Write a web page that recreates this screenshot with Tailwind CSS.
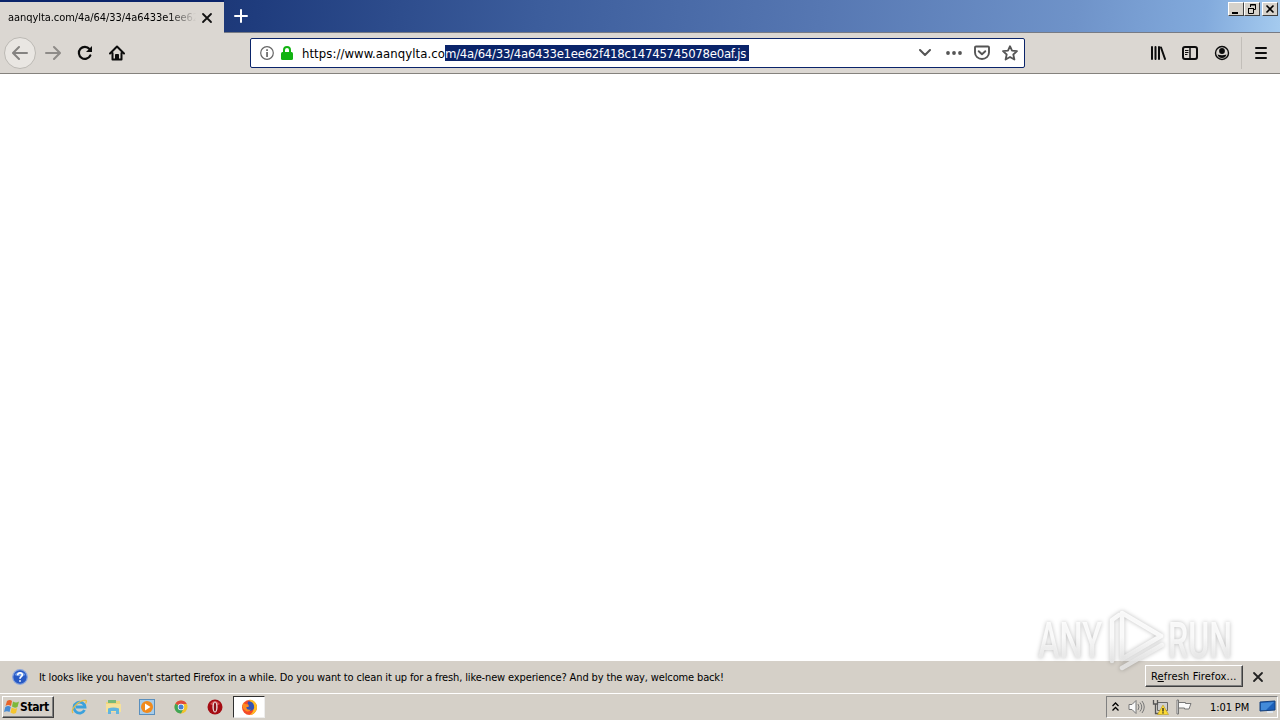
<!DOCTYPE html>
<html lang="en">
<head>
<meta charset="utf-8">
<title>Firefox</title>
<script src="https://cdn.jsdelivr.net/npm/@tailwindcss/browser@4"></script>
</head>
<body class="w-[1280px] h-[720px] overflow-hidden flex flex-col bg-white text-black font-['DejaVu_Sans_Condensed','DejaVu_Sans',sans-serif] text-[11px] leading-none">

<!-- Tab strip -->
<header class="h-[33px] shrink-0 flex items-start bg-[linear-gradient(97deg,#1b3574_15%,#1f3c7d_20%,#3c5d9c_42%,#5677b2_64%,#6f93c9_84%,#82aadc_94%,#a5cbef_100%)]">
  <div class="w-[224px] h-[33px] bg-[#dbd7d2] border-t-2 border-[#0a246a] flex items-center pl-2">
    <div class="w-[188px] h-4 overflow-hidden whitespace-nowrap leading-4 tracking-[-0.06px] mask-r-from-85% mask-r-to-100%">aanqylta.com/4a/64/33/4a6433e1ee62</div>
    <svg class="ml-[5px]" width="12" height="12" viewBox="0 0 12 12" stroke="#111" stroke-width="1.800" stroke-linecap="round"><path d="M2 2l8 8M10 2l-8 8"/></svg>
  </div>
  <div class="flex-1 h-[33px] border-b border-[#777b85] flex justify-between pl-[10px] pr-[2px]">
    <svg class="mt-[9px]" width="14" height="14" viewBox="0 0 14 14" stroke="#fff" stroke-width="2" stroke-linecap="round"><path d="M7 1v12M1 7h12"/></svg>
    <div class="flex mt-[2px]">
      <div class="w-4 h-[14px] bg-[#d6d2cb] border border-t-white border-l-white border-r-[#404040] border-b-[#404040]"><svg width="14" height="12" viewBox="0 0 14 12"><path d="M3 9h6v2H3z"/></svg></div>
      <div class="w-4 h-[14px] bg-[#d6d2cb] border border-t-white border-l-white border-r-[#404040] border-b-[#404040]"><svg width="14" height="12" viewBox="0 0 14 12" fill="none" stroke="#000"><path d="M5.500 4V1.500h5v5H9M5 2h6M3.500 5.500h5v5h-5zM3 5.500h6"/></svg></div>
      <div class="ml-[2px] w-4 h-[14px] bg-[#d6d2cb] border border-t-white border-l-white border-r-[#404040] border-b-[#404040]"><svg width="14" height="12" viewBox="0 0 14 12" stroke="#000" stroke-width="1.600"><path d="M3.500 2.500l7 7M10.500 2.500l-7 7"/></svg></div>
    </div>
  </div>
</header>

<!-- Navigation toolbar -->
<nav class="h-[41px] shrink-0 bg-[#dbd7d2] border-b border-[#85827d] flex items-center">
  <div class="ml-1 w-8 h-8 rounded-full border border-[#bcb9b4] bg-[#e9e6e2] flex items-center justify-center">
    <svg width="16" height="16" viewBox="0 0 16 16" fill="none" stroke="#858381" stroke-width="2" stroke-linecap="round" stroke-linejoin="round"><path d="M15 8H1.500M7 2L1 8l6 6"/></svg>
  </div>
  <svg class="ml-[9px]" width="16" height="16" viewBox="0 0 16 16" fill="none" stroke="#8e8b88" stroke-width="2" stroke-linecap="round" stroke-linejoin="round"><path d="M1 8h13.500M9 2l6 6-6 6"/></svg>
  <svg class="ml-4" width="16" height="16" viewBox="0 0 16 16" fill="none" stroke="#0c0c0c" stroke-width="2.200" stroke-linecap="round"><path d="M13.300 10.500A6 6 0 1 1 12.500 4"/><path d="M15 1v6H9z" fill="#0c0c0c" stroke="none"/></svg>
  <svg class="ml-4" width="16" height="16" viewBox="0 0 16 16" fill="none" stroke="#0c0c0c" stroke-width="2" stroke-linecap="round" stroke-linejoin="round"><path d="M1 8.500L8 1.500l7 7M3.500 8v6.500h9V8"/><path d="M6.500 14V9.500h3V14z" fill="#0c0c0c" stroke-width="1"/></svg>
  <div class="ml-[125px] w-[775px] h-[30px] rounded-[2px] border border-[#0a246a] bg-white flex items-center pl-[9px] pr-[6px]">
    <svg width="14" height="14" viewBox="0 0 14 14"><circle cx="7" cy="7" r="6.300" fill="none" stroke="#666" stroke-width="1.200"/><path d="M6.200 6h1.700v5H6.200zM6.200 3.200h1.700v1.700H6.200z" fill="#666"/></svg>
    <svg class="ml-[7px]" width="12" height="14" viewBox="0 0 12 14"><path d="M3 7V4a3 3 0 0 1 6 0v3" fill="none" stroke="#12b312" stroke-width="2"/><rect y="6" width="12" height="8" rx="1.500" fill="#12b312"/></svg>
    <div class="ml-[9px] flex whitespace-nowrap text-[13px] leading-[17px]">
      <span class="w-[143px] tracking-[0.06px]">https://www.aanqylta.co</span><span class="w-[304px] h-4 bg-[#0a246a] text-white tracking-[-0.25px]">m/4a/64/33/4a6433e1ee62f418c14745745078e0af.js</span>
    </div>
    <div class="ml-auto flex items-center">
      <svg width="12" height="8" viewBox="0 0 12 8" fill="none" stroke="#555" stroke-width="2" stroke-linecap="round" stroke-linejoin="round"><path d="M1 1l5 5 5-5"/></svg>
      <svg class="ml-[15px]" width="16" height="4" viewBox="0 0 16 4" fill="#555"><circle cx="2" cy="2" r="1.900"/><circle cx="8" cy="2" r="1.900"/><circle cx="14" cy="2" r="1.900"/></svg>
      <svg class="ml-3" width="16" height="16" viewBox="0 0 16 16" fill="none" stroke="#555" stroke-width="1.900" stroke-linecap="round" stroke-linejoin="round"><path d="M2 1.500h12a1 1 0 0 1 1 1V7.500a7 6.500 0 0 1-14 0V2.500a1 1 0 0 1 1-1z"/><path d="M4.700 6.200L8 9.300l3.300-3.100"/></svg>
      <svg class="ml-3" width="16" height="16" viewBox="0 0 16 16" fill="none" stroke="#555" stroke-width="1.800" stroke-linejoin="round"><path d="M8 1.200l2 4.500 5 .5-3.700 3.300 1.100 5L8 12l-4.400 2.500 1.100-5L1 6.200l5-.5z"/></svg>
    </div>
  </div>
  <div class="ml-auto h-full flex items-center pr-[13px]">
    <svg width="16" height="14" viewBox="0 0 16 14" stroke="#0c0c0c" stroke-width="2" stroke-linecap="round"><path d="M2 1v12M5.500 1v12M9 1v12M11 1.500l4 11.500"/></svg>
    <svg class="ml-4" width="16" height="14" viewBox="0 0 16 14" fill="none" stroke="#0c0c0c" stroke-width="2"><rect x="1" y="1" width="14" height="12" rx="2"/><path d="M8 1v12" stroke-width="1.500"/><path d="M3 4.500h3.500M3 6.500h3.500M3 8.500h2.500" stroke-width="1"/></svg>
    <svg class="ml-4" width="16" height="16" viewBox="0 0 16 16"><circle cx="8" cy="8" r="6.500" fill="none" stroke="#0c0c0c" stroke-width="1.400"/><circle cx="8" cy="6" r="2.900" fill="#0c0c0c"/><path d="M3.500 9.500q4.500 1.500 9 0Q11.500 13 8 13t-4.500-3.500z" fill="#0c0c0c"/></svg>
    <div class="ml-[11px] w-px h-8 bg-[#c2beb9]"></div>
    <svg class="ml-[13px]" width="12" height="12" viewBox="0 0 12 12" stroke="#0c0c0c" stroke-width="2" stroke-linecap="round"><path d="M1 1h10M1 6h10M1 11h10"/></svg>
  </div>
</nav>

<main class="flex-1 bg-white"></main>

<!-- Notification bar -->
<section class="h-[32px] shrink-0 bg-[#d5d0c8] flex items-center pl-3 pr-4">
  <svg width="16" height="16" viewBox="0 0 16 16"><circle cx="8" cy="8" r="7.300" fill="#2759c4" stroke="#8aa5dd" stroke-width="1.200"/><path d="M2.500 6a6 5 0 0 1 11 0q-5 2.500-11 0z" fill="#6f9be9"/><path d="M5.700 6.200C5.700 3 10.500 3.300 10.300 6 10.200 7.700 8 7.700 8 9.800M8 11.200v1.600" fill="none" stroke="#fff" stroke-width="1.700"/></svg>
  <p class="ml-[11px] w-[690px] whitespace-nowrap leading-[17px] tracking-[-0.14px]">It looks like you haven't started Firefox in a while. Do you want to clean it up for a fresh, like-new experience? And by the way, welcome back!</p>
  <div class="ml-auto mb-[2px] w-[98px] h-[22px] bg-[#d5d0c8] border border-t-white border-l-white border-r-[#404040] border-b-[#404040] shadow-[inset_-1px_-1px_#808080] pl-[5px] whitespace-nowrap leading-[21px] tracking-[0.17px]">R<span class="underline">e</span>fresh Firefox...</div>
  <svg class="ml-[9px]" width="12" height="12" viewBox="0 0 12 12" stroke="#222" stroke-width="1.800" stroke-linecap="round"><path d="M2 2l8 8M10 2l-8 8"/></svg>
</section>

<!-- Taskbar -->
<footer class="h-[27px] shrink-0 bg-[#d5d0c8] flex items-center border-t border-white pl-[2px] pr-[2px]">
  <div class="w-[52px] h-[22px] border border-t-white border-l-white border-r-[#404040] border-b-[#404040] shadow-[inset_-1px_-1px_#808080] flex items-center pl-px">
    <svg width="16" height="16" viewBox="0 0 16 16"><path d="M3 2q3-2 5 0L7 7Q4 5 1.500 7z" fill="#e8642a"/><path d="M9 2.500q3 2 6 0L13.500 8q-3 1.500-5.500-.5z" fill="#7db83a"/><path d="M1.300 8q3-2 5.500 0l-1.300 5Q3 11.500 0 13z" fill="#478bd4"/><path d="M7.700 8.500q3 2 5.500.5L12 14q-3 1.500-5.500-.5z" fill="#f5c52e"/></svg>
    <span class="text-[12px] font-bold tracking-[-0.4px]">Start</span>
  </div>
  <svg class="ml-[17px]" width="17" height="16" viewBox="0 0 17 16" fill="none"><path d="M13.500 11A5.500 5.500 0 1 1 14 8H5" stroke="#3ba1dc" stroke-width="2.800"/><path d="M2 14C-1 10 9 0 15 1.500q1 .8-.5 3" stroke="#e4bd48" stroke-width="1.300"/></svg>
  <svg class="ml-[17px]" width="17" height="16" viewBox="0 0 17 16"><path d="M1 3h5l1-1h8v11H1z" fill="#efd57e"/><path d="M3 1h8v3H3z" fill="#77b978"/><path d="M1 5h15v8H1z" fill="#f5e19b"/><path d="M3 15V9.500q5.500-2 11 0V15h-3v-3H6v3z" fill="#62b5df"/></svg>
  <svg class="ml-[17px]" width="16" height="16" viewBox="0 0 16 16"><rect x=".5" y=".5" width="15" height="15" fill="#a7cce9" stroke="#5a8fbd"/><circle cx="8" cy="8" r="6" fill="#f18a1c"/><path d="M6 4.500L11.500 8 6 11.500z" fill="#fff"/></svg>
  <svg class="ml-[18px]" width="16" height="16" viewBox="0 0 16 16"><circle cx="8" cy="8" r="6.500" fill="#f2c32c"/><path d="M8 8L2.370 4.750A6.500 6.500 0 0 1 13.630 4.750L13.600 5H8z" fill="#df4a3c"/><path d="M8 8L2.370 4.750A6.500 6.500 0 0 0 8 14.500l2-4z" fill="#40a557"/><circle cx="8" cy="8" r="3.200" fill="#fff"/><circle cx="8" cy="8" r="2.500" fill="#467fd2"/></svg>
  <svg class="ml-[18px]" width="16" height="16" viewBox="0 0 16 16"><circle cx="8" cy="8" r="7.500" fill="#a50c13"/><path d="M3 5q5-6 10 0-5 3-10 0z" fill="#d44c4e"/><ellipse cx="8" cy="8" rx="2.600" ry="5.500" fill="#e9dada"/><ellipse cx="8" cy="8" rx="1.200" ry="4.500" fill="#8c1016"/></svg>
  <div class="ml-[10px] w-8 h-[22px] bg-white border border-t-[#303030] border-l-[#303030] border-r-[#eee] border-b-[#eee] flex items-center justify-center">
    <svg width="17" height="17" viewBox="0 0 17 17"><circle cx="8.500" cy="8.500" r="7.500" fill="#f44b27"/><path d="M8 1c4-1 8 3 8 7 0 5-4 8-8 8 5-2 7-8 0-15z" fill="#ffbd24"/><path d="M7 2.500q5-.5 6 4T9 12Q5 11 5 8q2 0 3-2-2-1-1-3.500z" fill="#3554b5"/><path d="M2 3.500L4 5l3 .5 1 2-3 1q1 3 5 2-2 3-5 1.500T1.500 8z" fill="#ff8b20"/></svg>
  </div>
  <div class="ml-auto w-[172px] h-[22px] border border-t-[#808080] border-l-[#808080] border-r-white border-b-white flex items-center pl-[5px] pr-[1px]">
    <svg width="7" height="10" viewBox="0 0 7 10" fill="none" stroke="#000" stroke-width="1.300"><path d="M.5 4l3-3 3 3M.5 8.500l3-3 3 3"/></svg>
    <svg class="ml-[9px]" width="17" height="16" viewBox="0 0 17 16" fill="none" stroke="#777"><path d="M1 5.500h3l4-4v13l-4-4H1z" fill="#fafafa"/><path d="M10 5q2 3 0 6M12 3.500q3.500 4.500 0 9M14 2q4.500 6 0 12"/></svg>
    <svg class="ml-[7px]" width="17" height="16" viewBox="0 0 17 16"><path d="M5.500 3.500h10v8h-10z" fill="#cfcfcf" stroke="#666"/><path d="M1.500 1v4h4V1M3.500 5v9.500h6" fill="none" stroke="#555" stroke-width="1.300"/><path d="M11 6l5.500 9.500h-11z" fill="#fdda32" stroke="#b99a1c" stroke-width=".6"/><path d="M11 9v3.500M11 13.200v1.200" stroke="#222" stroke-width="1.300"/></svg>
    <svg class="ml-[7px]" width="16" height="16" viewBox="0 0 16 16" fill="#fafafa" stroke="#777"><path d="M2.500 3.500h7v1h5.500q-1 2.500-2 5.500H8.500V9H2.500z"/><path d="M1 1h1.500v14H1z"/></svg>
    <span class="ml-[18px] w-[40px] whitespace-nowrap tracking-[-0.1px]">1:01 PM</span>
    <svg class="ml-auto" width="17" height="14" viewBox="0 0 17 14"><path d="M1 2l15-1v9L1 11z" fill="#1d60b9" stroke="#17427d"/><path d="M2 3l13-1-8 8H2z" fill="#438bd9"/><path d="M8 11h6v2H8z" fill="#dde5ee"/></svg>
  </div>
</footer>

<!-- Translucent watermark over the window -->
<div class="absolute left-[1030px] top-[602px] w-[210px] h-[78px] pointer-events-none">
  <svg class="drop-shadow-[0_0_2px_rgba(0,0,0,0.3)]" width="210" height="78" viewBox="0 0 210 78" fill="none">
    <defs><linearGradient id="fade" x1="0" y1="20" x2="0" y2="70" gradientUnits="userSpaceOnUse"><stop offset=".3" stop-color="#fff"/><stop offset=".75" stop-color="#e7e7e7"/></linearGradient></defs>
    <g font-family="Roboto, sans-serif" font-size="50" font-weight="500" fill="url(#fade)" fill-opacity=".85"><text x="8" y="56" textLength="64" lengthAdjust="spacingAndGlyphs">ANY</text><text x="138" y="56" textLength="64" lengthAdjust="spacingAndGlyphs">RUN</text></g>
    <path d="M82 59V18l7-5M92 50V11l39 23-39 23V46M92 66l40-23" stroke="url(#fade)" stroke-opacity=".85" stroke-width="4.500" stroke-linejoin="round" stroke-linecap="round"/>
  </svg>
</div>
</body>
</html>
